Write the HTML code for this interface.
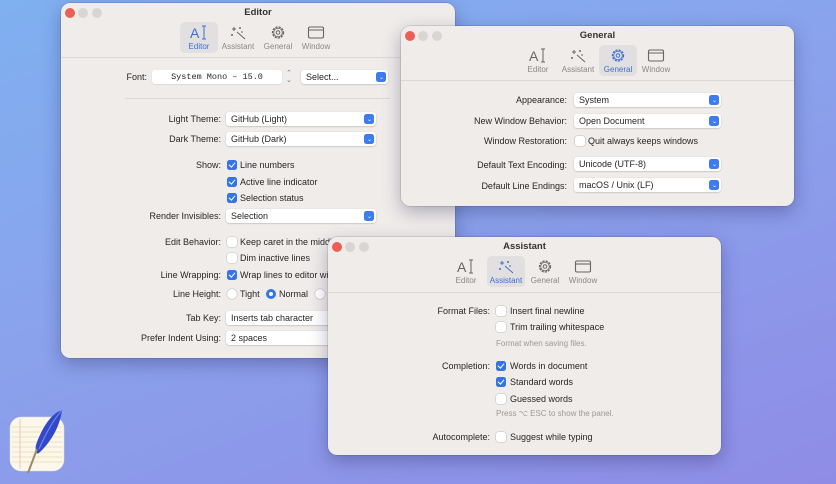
<!DOCTYPE html>
<html><head><meta charset="utf-8"><style>
*{margin:0;padding:0;box-sizing:border-box}
body{width:836px;height:484px;overflow:hidden;position:relative;font-family:"Liberation Sans",sans-serif;font-size:9px;color:#262626;
background:linear-gradient(160deg,#7fb0f0 0%,#8aa2ec 45%,#8f8ce6 100%)}
.win{position:absolute;background:#f0ecea;border-radius:9px;box-shadow:0 6px 18px rgba(40,40,90,.35),0 0 0 .5px rgba(0,0,0,.2);overflow:hidden}
.tl{position:absolute;top:5px;width:10px;height:10px;border-radius:50%;background:#d9d5d3}
.tl.r{background:#ed5f56}
.title{position:absolute;top:4px;left:0;right:0;text-align:center;font-weight:bold;font-size:9.5px;color:#333}
.sep{position:absolute;left:0;right:0;height:1px;background:#dcd8d5}
.ti{position:absolute;top:19px;width:38px;height:31px;margin-left:-19px;text-align:center;color:#888;font-size:8px;border-radius:5px}
.ti.sel{background:#e2dfe0;color:#3d6fd0}
.ti svg{display:block;margin:3px auto 0}
.ti span{position:absolute;left:-10px;right:-10px;top:20px}
.l{position:absolute;text-align:right;white-space:nowrap}
.t{position:absolute;white-space:nowrap}
.pop{position:absolute;height:14px;background:#fff;border-radius:3px;box-shadow:0 .5px 1.5px rgba(0,0,0,.25);padding:2px 5px;white-space:nowrap;overflow:hidden}
.pop.b:after{content:"";position:absolute;right:2px;top:2px;width:10px;height:10px;border-radius:2.5px;background:#3c7cf0}
.pop i{position:absolute;right:4px;top:1px;color:#fff;font-style:normal;font-size:6px;line-height:5px;z-index:1;text-align:center}
.cb{position:absolute;width:10px;height:10px;border-radius:2.5px;background:#fff;box-shadow:0 0 0 .5px rgba(0,0,0,.2)}
.cb.on{background:#3574e8;box-shadow:none}
.cb.on:after{content:"";position:absolute;left:3.3px;top:1.2px;width:2.5px;height:5px;border:solid #fff;border-width:0 1.5px 1.5px 0;transform:rotate(40deg)}
.gray{color:#999;font-size:8px}
</style></head><body>

<!-- Editor window -->
<div class="win" style="left:61px;top:3px;width:394px;height:355px">
 <div class="tl r" style="left:4px"></div><div class="tl" style="left:17px"></div><div class="tl" style="left:31px"></div>
 <div class="title">Editor</div>
 <div class="ti sel" style="left:138px"><svg width="18" height="15" viewBox="0 0 18 15"><text x="0" y="13" font-size="14" fill="#3d6fd0" font-family="Liberation Sans">A</text><path d="M12 1h4M14 1v13M12 14h4" stroke="#3d6fd0" fill="none" stroke-width="1"/></svg><span>Editor</span></div>
 <div class="ti" style="left:177px"><svg width="18" height="15" viewBox="0 0 18 15" stroke="#666" fill="none" stroke-width="1"><path d="M8 7l8 7M5 2v4M3 4h4M11 2v2M10 3h2M3 9v2M2 10h2M12 7h2"/></svg><span>Assistant</span></div>
 <div class="ti" style="left:217px"><svg width="18" height="15" viewBox="0 0 18 15"><circle cx="9" cy="7.5" r="5.5" stroke="#666" fill="none" stroke-width="1.3" stroke-dasharray="2.2 1.1"/><circle cx="9" cy="7.5" r="4.3" stroke="#666" fill="none" stroke-width=".8"/><circle cx="9" cy="7.5" r="1.8" stroke="#666" fill="none" stroke-width="1"/></svg><span>General</span></div>
 <div class="ti" style="left:255px"><svg width="18" height="15" viewBox="0 0 18 15" stroke="#666" fill="none" stroke-width="1.1"><rect x="1.5" y="2" width="15" height="11" rx="1.5"/><path d="M1.5 5h15"/></svg><span>Window</span></div>
 <div class="sep" style="top:54px"></div>
 <div class="l" style="left:0;width:86px;top:69px">Font:</div>
 <div class="pop" style="left:91px;top:67px;width:130px;font-family:'Liberation Mono',monospace;font-size:8.5px;text-align:center;box-shadow:0 .5px 1px rgba(0,0,0,.15)">System Mono – 15.0</div>
 <div class="t" style="left:225px;top:67px;color:#777;font-size:7px;line-height:7px">⌃<br>⌄</div>
 <div class="pop b" style="left:240px;top:67px;width:87px">Select...<i>⌃<br>⌄</i></div>
 <div class="sep" style="top:95px;left:64px;right:65px"></div>
 <div class="l" style="left:0;width:160px;top:111px">Light Theme:</div>
 <div class="pop b" style="left:165px;top:109px;width:150px">GitHub (Light)<i>⌃<br>⌄</i></div>
 <div class="l" style="left:0;width:160px;top:131px">Dark Theme:</div>
 <div class="pop b" style="left:165px;top:129px;width:150px">GitHub (Dark)<i>⌃<br>⌄</i></div>
 <div class="l" style="left:0;width:160px;top:157px">Show:</div>
 <div class="cb on" style="left:166px;top:157px"></div><div class="t" style="left:179px;top:157px">Line numbers</div>
 <div class="cb on" style="left:166px;top:174px"></div><div class="t" style="left:179px;top:174px">Active line indicator</div>
 <div class="cb on" style="left:166px;top:190px"></div><div class="t" style="left:179px;top:190px">Selection status</div>
 <div class="l" style="left:0;width:160px;top:208px">Render Invisibles:</div>
 <div class="pop b" style="left:165px;top:206px;width:150px">Selection<i>⌃<br>⌄</i></div>
 <div class="l" style="left:0;width:160px;top:234px">Edit Behavior:</div>
 <div class="cb" style="left:166px;top:234px"></div><div class="t" style="left:179px;top:234px">Keep caret in the middle</div>
 <div class="cb" style="left:166px;top:250px"></div><div class="t" style="left:179px;top:250px">Dim inactive lines</div>
 <div class="l" style="left:0;width:160px;top:267px">Line Wrapping:</div>
 <div class="cb on" style="left:166px;top:267px"></div><div class="t" style="left:179px;top:267px">Wrap lines to editor width</div>
 <div class="l" style="left:0;width:160px;top:286px">Line Height:</div>
 <div class="cb" style="left:166px;top:286px;border-radius:50%"></div><div class="t" style="left:179px;top:286px">Tight</div>
 <div class="cb" style="left:205px;top:286px;border-radius:50%;background:#fff;box-shadow:inset 0 0 0 3px #3574e8"></div><div class="t" style="left:218px;top:286px">Normal</div>
 <div class="cb" style="left:254px;top:286px;border-radius:50%"></div>
 <div class="l" style="left:0;width:160px;top:310px">Tab Key:</div>
 <div class="pop" style="left:165px;top:308px;width:150px">Inserts tab character</div>
 <div class="l" style="left:0;width:160px;top:330px">Prefer Indent Using:</div>
 <div class="pop" style="left:165px;top:328px;width:150px">2 spaces</div>
</div>

<!-- General window -->
<div class="win" style="left:401px;top:26px;width:393px;height:180px">
 <div class="tl r" style="left:4px"></div><div class="tl" style="left:17px"></div><div class="tl" style="left:31px"></div>
 <div class="title">General</div>
 <div class="ti" style="left:137px"><svg width="18" height="15" viewBox="0 0 18 15"><text x="0" y="13" font-size="14" fill="#666" font-family="Liberation Sans">A</text><path d="M12 1h4M14 1v13M12 14h4" stroke="#666" fill="none"/></svg><span>Editor</span></div>
 <div class="ti" style="left:177px"><svg width="18" height="15" viewBox="0 0 18 15" stroke="#666" fill="none" stroke-width="1"><path d="M8 7l8 7M5 2v4M3 4h4M11 2v2M10 3h2M3 9v2M2 10h2M12 7h2"/></svg><span>Assistant</span></div>
 <div class="ti sel" style="left:217px"><svg width="18" height="15" viewBox="0 0 18 15"><circle cx="9" cy="7.5" r="5.5" stroke="#3d6fd0" fill="none" stroke-width="1.3" stroke-dasharray="2.2 1.1"/><circle cx="9" cy="7.5" r="4.3" stroke="#3d6fd0" fill="none" stroke-width=".8"/><circle cx="9" cy="7.5" r="1.8" stroke="#3d6fd0" fill="none"/></svg><span>General</span></div>
 <div class="ti" style="left:255px"><svg width="18" height="15" viewBox="0 0 18 15" stroke="#666" fill="none" stroke-width="1.1"><rect x="1.5" y="2" width="15" height="11" rx="1.5"/><path d="M1.5 5h15"/></svg><span>Window</span></div>
 <div class="sep" style="top:54px"></div>
 <div class="l" style="left:0;width:166px;top:69px">Appearance:</div>
 <div class="pop b" style="left:173px;top:67px;width:147px">System<i>⌃<br>⌄</i></div>
 <div class="l" style="left:0;width:166px;top:90px">New Window Behavior:</div>
 <div class="pop b" style="left:173px;top:88px;width:147px">Open Document<i>⌃<br>⌄</i></div>
 <div class="l" style="left:0;width:166px;top:110px">Window Restoration:</div>
 <div class="cb" style="left:174px;top:110px"></div><div class="t" style="left:187px;top:110px">Quit always keeps windows</div>
 <div class="l" style="left:0;width:166px;top:134px">Default Text Encoding:</div>
 <div class="pop b" style="left:173px;top:131px;width:147px">Unicode (UTF-8)<i>⌃<br>⌄</i></div>
 <div class="l" style="left:0;width:166px;top:155px">Default Line Endings:</div>
 <div class="pop b" style="left:173px;top:152px;width:147px">macOS / Unix (LF)<i>⌃<br>⌄</i></div>
</div>

<!-- Assistant window -->
<div class="win" style="left:328px;top:237px;width:393px;height:218px">
 <div class="tl r" style="left:4px"></div><div class="tl" style="left:17px"></div><div class="tl" style="left:31px"></div>
 <div class="title">Assistant</div>
 <div class="ti" style="left:138px"><svg width="18" height="15" viewBox="0 0 18 15"><text x="0" y="13" font-size="14" fill="#666" font-family="Liberation Sans">A</text><path d="M12 1h4M14 1v13M12 14h4" stroke="#666" fill="none"/></svg><span>Editor</span></div>
 <div class="ti sel" style="left:178px"><svg width="18" height="15" viewBox="0 0 18 15" stroke="#3d6fd0" fill="none" stroke-width="1"><path d="M8 7l8 7M5 2v4M3 4h4M11 2v2M10 3h2M3 9v2M2 10h2M12 7h2"/></svg><span>Assistant</span></div>
 <div class="ti" style="left:217px"><svg width="18" height="15" viewBox="0 0 18 15"><circle cx="9" cy="7.5" r="5.5" stroke="#666" fill="none" stroke-width="1.3" stroke-dasharray="2.2 1.1"/><circle cx="9" cy="7.5" r="4.3" stroke="#666" fill="none" stroke-width=".8"/><circle cx="9" cy="7.5" r="1.8" stroke="#666" fill="none"/></svg><span>General</span></div>
 <div class="ti" style="left:255px"><svg width="18" height="15" viewBox="0 0 18 15" stroke="#666" fill="none" stroke-width="1.1"><rect x="1.5" y="2" width="15" height="11" rx="1.5"/><path d="M1.5 5h15"/></svg><span>Window</span></div>
 <div class="sep" style="top:55px"></div>
 <div class="l" style="left:0;width:162px;top:69px">Format Files:</div>
 <div class="cb" style="left:168px;top:69px"></div><div class="t" style="left:182px;top:69px">Insert final newline</div>
 <div class="cb" style="left:168px;top:85px"></div><div class="t" style="left:182px;top:85px">Trim trailing whitespace</div>
 <div class="t gray" style="left:168px;top:102px">Format when saving files.</div>
 <div class="l" style="left:0;width:162px;top:124px">Completion:</div>
 <div class="cb on" style="left:168px;top:124px"></div><div class="t" style="left:182px;top:124px">Words in document</div>
 <div class="cb on" style="left:168px;top:140px"></div><div class="t" style="left:182px;top:140px">Standard words</div>
 <div class="cb" style="left:168px;top:157px"></div><div class="t" style="left:182px;top:157px">Guessed words</div>
 <div class="t gray" style="left:168px;top:172px">Press ⌥ ESC to show the panel.</div>
 <div class="l" style="left:0;width:162px;top:195px">Autocomplete:</div>
 <div class="cb" style="left:168px;top:195px"></div><div class="t" style="left:182px;top:195px">Suggest while typing</div>
</div>

<!-- App icon -->
<svg style="position:absolute;left:8px;top:405px" width="60" height="72" viewBox="0 0 60 72">
 <rect x="2" y="12" width="54" height="54" rx="11" fill="#fbf7ea" stroke="#ddd" stroke-width=".5"/>
 <g stroke="#ecd9b4" stroke-width=".8"><path d="M4 22h50M4 27h50M4 32h50M4 37h50M4 42h50M4 47h50M4 52h50M4 57h50"/></g>
 <path d="M12 14v50" stroke="#f0b9b0" stroke-width=".8"/>
 <path d="M54 5C44 8 34 22 28 40c-1 6 0 10 3 8C42 38 52 22 54 5z" fill="#3348c8"/>
 <path d="M54 5C46 14 38 28 31 44" stroke="#6c85f0" stroke-width="1.2" fill="none"/>
 <path d="M29 44L20 68" stroke="#9a8a6a" stroke-width="2"/>
</svg>
</body></html>
